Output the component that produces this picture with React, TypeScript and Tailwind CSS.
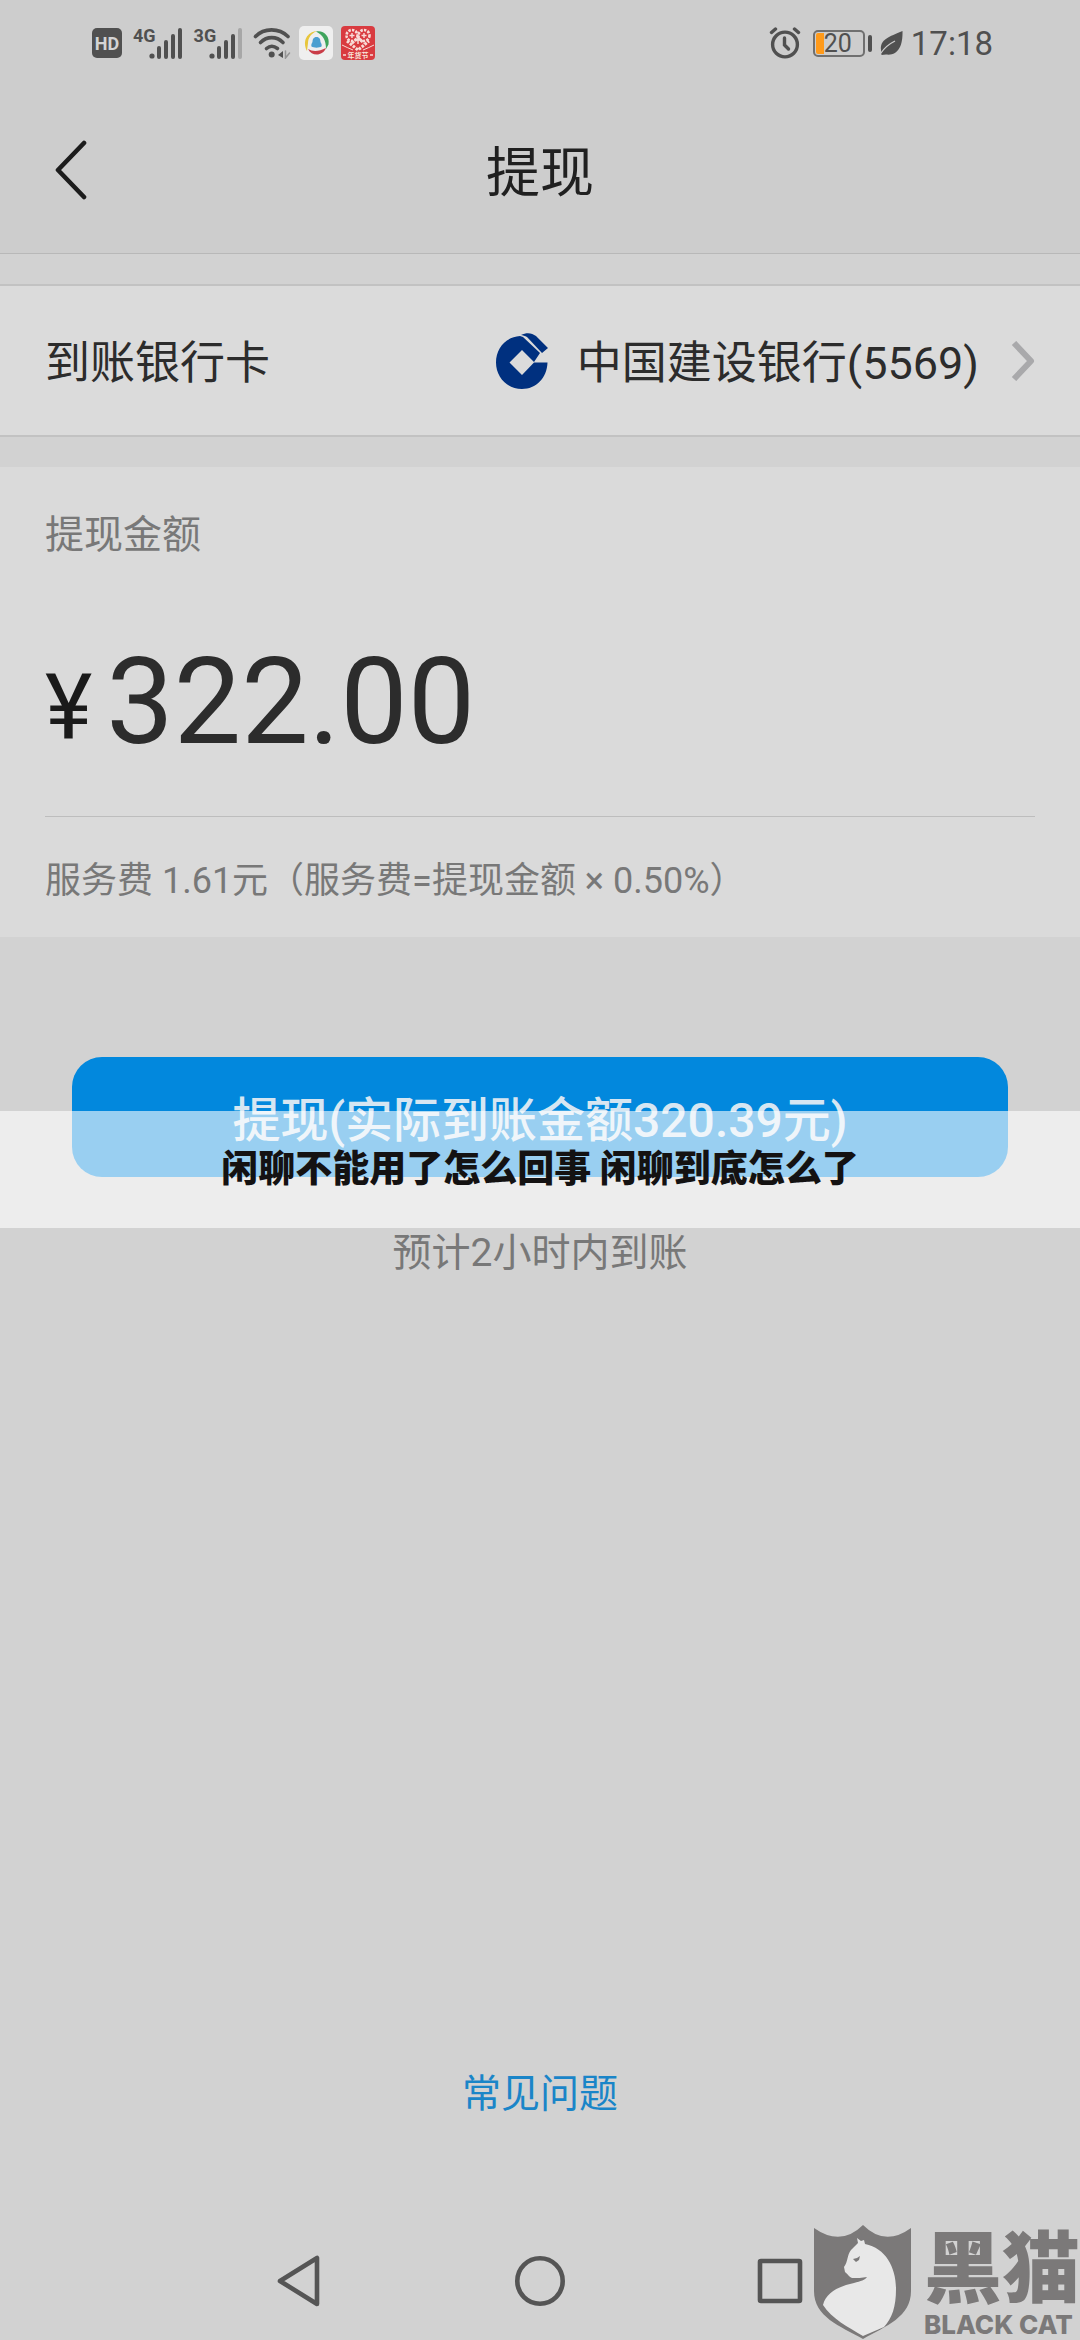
import type { ReactNode } from 'react';

function SignalBars({ label, weak }: { label: string; weak?: boolean }) {
  return (
    <div className="flex items-start">
      <span className="font-[Roboto,sans-serif] text-[18px] leading-none font-bold">{label}</span>
      <svg width="34" height="32" viewBox="0 0 34 32" className="-ml-2" fill="currentColor" aria-hidden="true">
        <circle cx="4" cy="29" r="2.6" />
        <rect x="9" y="19" width="4" height="13" rx="2" />
        <rect x="16" y="13" width="4" height="19" rx="2" />
        <rect x="23" y="7" width="4" height="25" rx="2" />
        <rect x="30" y="1" width="4" height="31" rx="2" opacity={weak ? 0.3 : 1} />
      </svg>
    </div>
  );
}

function WifiIcon() {
  return (
    <svg width="38" height="32" viewBox="0 0 38 32" fill="none" stroke="currentColor" strokeWidth="3.6" strokeLinecap="round" aria-hidden="true">
      <path d="M2.500 9.500C11 .7 26 .7 35 9.500" />
      <path d="M7.500 15.500C14 9 23.500 9 30 15.500" />
      <path d="M13.500 21.500Q18.700 17 24.500 21.500" />
      <circle cx="18.700" cy="27.500" r="3" fill="currentColor" stroke="none" />
      <path d="M30 24v7l-5-3z" fill="currentColor" stroke="none" />
      <path d="M32.500 24v7l4-5" strokeWidth="1.500" opacity=".45" />
    </svg>
  );
}

function NewsIcon() {
  return (
    <svg width="34" height="34" viewBox="0 0 34 34" fill="none" aria-hidden="true">
      <rect width="34" height="34" rx="5" fill="#efefef" />
      <path d="M8 25C3 15 8 6 18 5c-6 2.500-9 7-9 12z" fill="#e8c63c" />
      <path d="M17 5.500c8-1.500 14 5 12.500 13L27 23c0-9-3-14-10-17.500z" fill="#3fa45c" />
      <path d="M9 23c5 3 11 2.500 18-1-3 8-14 9-18 1z" fill="#c93c48" />
      <path d="M17.500 11c3 0 4 2.500 4 5 1 1.500 1.500 3 1 4.500-2 1.500-8 1.500-10 0-.5-1.500 0-3 1-4.500 0-2.500 1-5 4-5z" fill="#4b9fd0" />
    </svg>
  );
}

function FestivalIcon() {
  return (
    <svg width="34" height="34" viewBox="0 0 34 34" fill="none" stroke="#f8dcd8" aria-hidden="true">
      <rect width="34" height="34" rx="4" fill="#d93b40" stroke="none" />
      <circle cx="11" cy="9.500" r="5.500" strokeWidth="2.600" strokeDasharray="2.400 1.200" />
      <circle cx="23" cy="9.500" r="5.500" strokeWidth="2.600" strokeDasharray="2.400 1.200" />
      <path d="M6 15l11 9 11-9M11 17l6-5 6 5" strokeWidth="3" strokeDasharray="2.600 1.200" />
      <path d="M11 7v5M8.500 9.500h5M23 7v5M20.500 9.500h5M17 11v7M14 14h6" strokeWidth="1.400" />
      <path d="M1 19q6 3 11 5M33 19q-6 3-11 5" strokeWidth="1" />
      <path d="M2 29h3M29 29h3" strokeWidth="1.500" />
      <text x="17" y="32" textAnchor="middle" fontSize="7" fontWeight="700" fill="#f8e6dc" stroke="none" fontFamily="Noto Sans CJK SC, sans-serif">年货节</text>
    </svg>
  );
}

function AlarmIcon() {
  return (
    <svg width="32" height="32" viewBox="0 0 32 32" fill="none" stroke="currentColor" strokeWidth="3.400" strokeLinecap="round" aria-hidden="true">
      <circle cx="16" cy="17.500" r="12.400" />
      <path d="M15.500 11v7l4 4" />
      <path d="M2.500 5.500l4-3.500M29.500 5.500l-4-3.500" />
    </svg>
  );
}

function LeafIcon() {
  return (
    <svg width="23" height="26" viewBox="0 0 23 26" aria-hidden="true">
      <path d="M22.500 1C23 16 18 26 6 24.500L1.500 25 1 20C0 9 9 7 22.500 1z" fill="currentColor" />
      <path d="M1 23C5 17 9 14 15 11" stroke="#cdcdcd" strokeWidth="1.300" fill="none" />
    </svg>
  );
}

function StatusBar() {
  return (
    <div className="flex h-[86px] items-center justify-between pr-[87px] pl-[92px] text-[#505050]">
      <div className="flex items-center gap-2">
        <span className="flex h-[30px] w-[30px] items-center justify-center rounded-[5px] bg-[#505050] font-[Roboto,sans-serif] text-[18px] font-bold text-[#d4d4d4]">
          HD
        </span>
        <div className="flex items-center gap-3 px-[3px]">
          <SignalBars label="4G" />
          <SignalBars label="3G" weak />
        </div>
        <WifiIcon />
        <NewsIcon />
        <FestivalIcon />
      </div>
      <div className="flex items-center gap-2">
        <AlarmIcon />
        <div className="flex items-center gap-[3px] pl-1">
          <div className="flex h-[27px] w-[52px] items-center rounded-[5px] border-2 border-[#707070] p-px">
            <span className="h-[21px] w-2 rounded-l-xs bg-[#ff9a1a]" />
            <span className="font-[Roboto,sans-serif] text-[25px] leading-none">20</span>
          </div>
          <span className="h-[17px] w-1 rounded-xs bg-[#505050]" />
        </div>
        <LeafIcon />
        <span className="font-[Roboto,sans-serif] text-[33px] leading-none">17:18</span>
      </div>
    </div>
  );
}

function BankLogo() {
  return (
    <svg width="53" height="56" viewBox="0 0 53 56" aria-hidden="true">
      <path
        d="M24 3C10 4 0 15 0 29.500S11 56 26 56c14 0 25-11 25.500-26.500H38L26 42 13.500 29.500 26 17l12 12 6-9L27 4z"
        fill="#00307f"
      />
      <path d="M25 2c6-3 11-2 15 1l12 12-6 5L31 4c-2-1-4-2-6-2z" fill="#00307f" />
    </svg>
  );
}

function BlackCatMark() {
  return (
    <div className="absolute right-0 bottom-0 flex items-end gap-3 text-[#7b7979]">
      <svg width="98" height="115" viewBox="0 0 98 115" aria-hidden="true">
        <path d="M0 3Q27 22 49 0 71 22 97 3V66C97 92 72 101 49 114 26 101 0 92 0 66z" fill="currentColor" />
        <path
          d="M43 13l4 3 3-1 1 4C72 23 82 43 82 64c0 18-4 29-12 38L49 111C34 102 18 94 9 80c3-13 17-19 31-22 7-2 11-3 13-6-5 1-10 1-15 1-3-1-4-4-7-6l-1-5c4-5 3-12 7-17l7-7z"
          fill="#e8e8e8"
        />
        <path d="M39 34l4-1 3-2-1 4-3 2z" fill="currentColor" />
      </svg>
      <div className="flex flex-col items-start">
        <span className="pb-2 font-['Noto_Sans_CJK_SC',sans-serif] text-[78px] leading-none font-black">黑猫</span>
        <span className="font-[Inter,sans-serif] text-[26px] leading-[30px] font-extrabold">BLACK CAT</span>
      </div>
    </div>
  );
}

function NavButton({ label, children }: { label: string; children: ReactNode }) {
  return (
    <button type="button" aria-label={label} className="flex h-20 w-20 items-center justify-center">
      <svg width="52" height="52" viewBox="0 0 52 52" fill="none" stroke="#555" strokeWidth="4.6" strokeLinejoin="round" aria-hidden="true">
        {children}
      </svg>
    </button>
  );
}

export default function App() {
  return (
    <div className="relative flex min-h-screen flex-col bg-[#d2d2d2] font-[Roboto,'Noto_Sans_CJK_SC',sans-serif] text-[#2c2c2c]">
      <header className="border-b border-[#b8b8b8] bg-[#cdcdcd]">
        <StatusBar />
        <div className="grid h-[167px] grid-cols-[1fr_auto_1fr] items-center px-[54px]">
          <button type="button" aria-label="返回" className="justify-self-start">
            <svg width="34" height="60" viewBox="0 0 34 60" fill="none" stroke="#1c1c1c" strokeWidth="4.6" strokeLinecap="round" strokeLinejoin="round" aria-hidden="true">
              <path d="M30 3L4 30l26 27" />
            </svg>
          </button>
          <h1 className="pt-2 text-[54px] leading-none text-[#202020]">提现</h1>
        </div>
      </header>

      <main className="flex grow flex-col">
        <button type="button" className="mt-[30px] flex h-[153px] items-center border-y-2 border-[#c2c2c2] bg-[#dbdbdb] px-[45px] text-[45px] leading-none">
          <span className="grow pt-1.5 text-left">到账银行卡</span>
          <BankLogo />
          <span className="ml-7 pt-1.5">中国建设银行(5569)</span>
          <svg width="24" height="40" viewBox="0 0 24 40" className="ml-8" fill="none" stroke="#a9a9ab" strokeWidth="6" strokeLinejoin="round" aria-hidden="true">
            <path d="M3 2l17 18L3 38" />
          </svg>
        </button>

        <section className="mt-[30px] bg-[#dadada] px-[45px]">
          <h2 className="pt-12 text-[39px] leading-[40px] text-[#787878]">提现金额</h2>
          <div className="flex h-[262px] items-center gap-3.5 border-b border-[#bdbdbd] pt-8">
            <span className="pt-3 text-[90px] leading-none text-[#1a1a1a]">¥</span>
            <span className="text-[120px] leading-none">322.00</span>
          </div>
          <p className="pt-11 pb-9 text-[36px] leading-[40px] text-[#787878]">服务费 1.61元（服务费=提现金额 × 0.50%）</p>
        </section>

        <div className="mt-[120px] px-[72px]">
          <button type="button" className="h-[120px] w-full rounded-[30px] bg-[#0288dd] pt-2 text-[48px] leading-none font-medium text-[#d6e6f2]">
            提现(实际到账金额320.39元)
          </button>
        </div>
        <p className="mt-14 text-center text-[39px] leading-[40px] text-[#787878]">预计2小时内到账</p>

        <a href="#faq" className="mt-auto mb-[107px] self-center text-[39px] leading-[40px] text-[#1a85c8]">
          常见问题
        </a>
      </main>

      <nav className="flex h-[119px] items-center justify-center gap-40 px-10">
        <NavButton label="后退">
          <path d="M6 26L43 3v46z" />
        </NavButton>
        <NavButton label="主页">
          <circle cx="26" cy="26" r="22.700" />
        </NavButton>
        <NavButton label="最近任务">
          <rect x="6" y="6" width="40" height="40" rx="1" />
        </NavButton>
      </nav>

      <div className="absolute inset-x-0 top-[1111px] flex h-[117px] items-center justify-center bg-white/60">
        <p className="pb-1.5 font-['Noto_Sans_CJK_SC',sans-serif] text-[37px] leading-none font-black text-[#141212]">
          闲聊不能用了怎么回事 闲聊到底怎么了
        </p>
      </div>
      <BlackCatMark />
    </div>
  );
}
